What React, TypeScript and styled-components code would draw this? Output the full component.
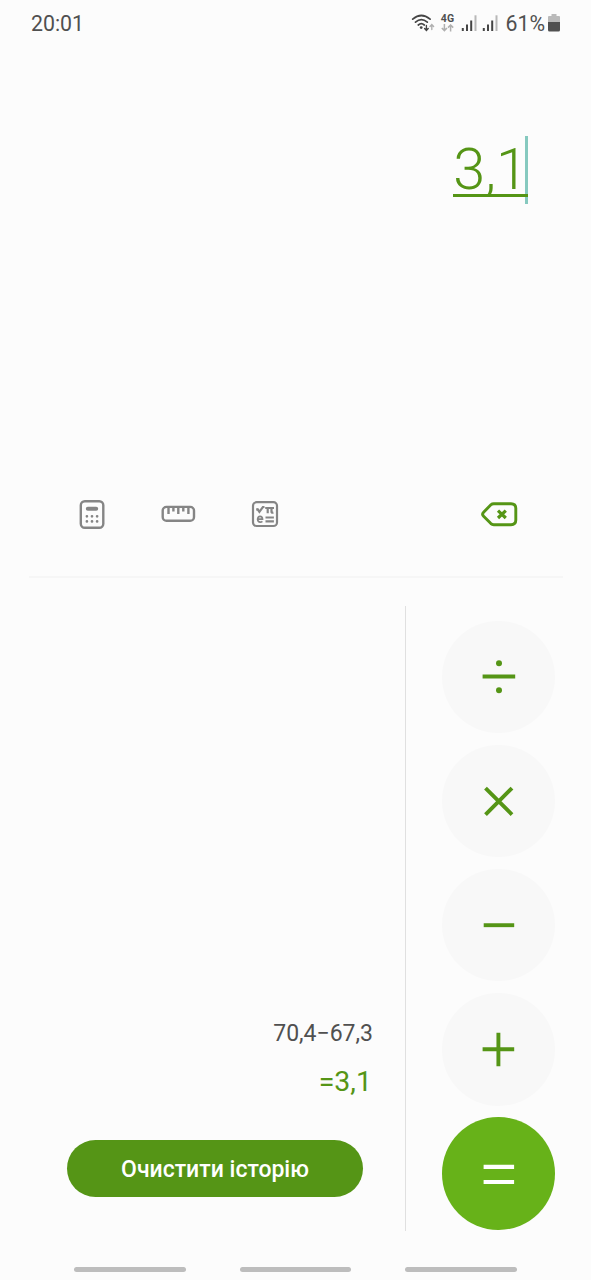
import React from "react";
import styled, { createGlobalStyle } from "styled-components";

const GREEN = "#559516";

const GlobalStyle = createGlobalStyle`
  * { box-sizing: border-box; }
  body { margin: 0; background: #fcfcfc; }
`;

const Screen = styled.main`
  width: 591px;
  height: 1280px;
  display: flex;
  flex-direction: column;
  background: #fcfcfc;
  font-family: Roboto, "Liberation Sans", sans-serif;
  overflow: hidden;
`;

const StatusBar = styled.header`
  height: 48px;
  padding: 0 31px 1px 31px;
  display: flex;
  align-items: center;
  justify-content: space-between;
  color: #505050;
  font-size: 21.3px;
  line-height: 26px;
`;

const StatusIcons = styled.div`
  display: flex;
  align-items: center;
  svg { display: block; }
`;

const StatusGlyphs = styled.div`
  display: flex;
  align-items: center;
  padding-bottom: 2px;
`;

const Network = styled.div`
  width: 14px;
  height: 20px;
  margin: 0 7px 0 5px;
  display: flex;
  flex-direction: column;
  align-items: center;
  font-size: 10.5px;
  font-weight: 700;
  line-height: 11px;
`;

const Percent = styled.span`
  margin: 0 3px 0 2px;
`;

const Display = styled.section`
  height: 427px;
  padding: 88px 63px 0 0;
  display: flex;
  justify-content: flex-end;
  align-items: flex-start;
`;

const Entry = styled.div`
  height: 68px;
  display: flex;
  border-right: 3px solid #86c9bf;
`;

const EntryText = styled.span`
  height: 61px;
  margin-right: -3px;
  border-bottom: 3px solid ${GREEN};
  color: ${GREEN};
  font-size: 57.5px;
  font-weight: 300;
  line-height: 67px;
`;

const Toolbar = styled.nav`
  height: 103px;
  margin: 0 28px 0 29px;
  padding: 22px 45px 0 49px;
  display: flex;
  align-items: flex-start;
  border-bottom: 2px solid #f6f6f6;
`;

const ToolButton = styled.button<{ $gap?: number; $end?: boolean }>`
  padding: 0;
  border: 0;
  background: none;
  height: 34px;
  display: flex;
  align-items: center;
  color: ${(p) => (p.$end ? GREEN : "#858585")};
  margin-right: ${(p) => p.$gap ?? 0}px;
  margin-left: ${(p) => (p.$end ? "auto" : "0")};
`;

const Body = styled.section`
  height: 653px;
  padding-top: 28px;
  display: flex;
`;

const History = styled.div`
  width: 406px;
  height: 625px;
  padding: 0 33px 34px 67px;
  border-right: 1px solid #e0e0e0;
  display: flex;
  flex-direction: column;
  justify-content: flex-end;
  align-items: flex-end;
`;

const Expression = styled.div`
  margin-right: -1px;
  color: #505050;
  font-size: 23px;
  line-height: 28px;
`;

const Result = styled.div`
  margin: 15px 0 39px;
  color: ${GREEN};
  font-size: 28.5px;
  line-height: 38px;
`;

const ClearButton = styled.button`
  width: 296px;
  height: 57px;
  margin-right: 9px;
  padding: 2px 0 0;
  border: 0;
  border-radius: 29px;
  background: ${GREEN};
  color: #fff;
  font: 500 23px/55px Roboto, "Liberation Sans", sans-serif;
`;

const Keys = styled.div`
  padding: 14.5px 0 0 36.4px;
  display: flex;
  flex-direction: column;
  gap: 11.7px;
`;

const Key = styled.button<{ $primary?: boolean }>`
  width: 112.5px;
  height: 112.5px;
  flex: none;
  padding: 0;
  border: 0;
  border-radius: 50%;
  display: flex;
  align-items: center;
  justify-content: center;
  background: ${(p) => (p.$primary ? "#67b219" : "#f8f8f8")};
  color: ${(p) => (p.$primary ? "#fff" : GREEN)};
`;

const NavBar = styled.footer`
  padding: 36px 0 0 74px;
  display: flex;
  gap: 54px;
`;

const NavPill = styled.div`
  width: 111.5px;
  height: 5px;
  border-radius: 3px;
  background: #bdbdbd;
`;

const Wifi = () => (
  <svg width="24" height="20" viewBox="0 0 24 20" fill="none" stroke="#454545" strokeWidth="1.7" strokeLinecap="round">
    <path d="M1.7 6.2Q10.3-1.2 19.1 6.2M4.5 9.2Q10.3 4 16.3 9.2M7.3 12Q10.3 9.4 13.3 12" />
    <circle cx="10.2" cy="14.6" r="1.4" fill="#454545" stroke="none" />
    <path d="M15.4 12.5v4.5M13.6 15.6l1.8 1.8 1.8-1.8" strokeWidth="1.4" />
    <path d="M20.8 16.5V12M19 13.4l1.8-1.8 1.8 1.8" stroke="#b0b0b0" strokeWidth="1.4" />
  </svg>
);

const DataArrows = () => (
  <svg width="13" height="8" viewBox="0 0 13 8" fill="none" stroke="#b0b0b0" strokeWidth="1.5">
    <path d="M3.4 0v6.5M.8 4l2.6 2.6L6 4M9.6 7.5V1M7 3.6L9.6 1l2.6 2.6" />
  </svg>
);

const Signal = () => (
  <svg width="21" height="18" viewBox="0 0 21 18">
    <path d="M.8 14h2v3h-2zM5 10.500h2V17H5zM9.200 6.500h2V17h-2z" fill="#454545" />
    <path d="M13.500 1.300h2V17h-2z" fill="#b8b8b8" />
  </svg>
);

const Battery = () => (
  <svg width="12" height="18" viewBox="0 0 12 18">
    <path d="M3.5 0h5v2H11q1 0 1 1v5H0V3q0-1 1-1h2.500z" fill="#bababa" />
    <path d="M0 8h12v8q0 1.500-1.500 1.500h-9Q0 17.500 0 16z" fill="#505050" />
  </svg>
);

const CalculatorIcon = () => (
  <svg width="28" height="32" viewBox="0 0 28 32" fill="none" stroke="currentColor">
    <rect x="2.800" y="3.200" width="22.500" height="26.600" rx="4" strokeWidth="2.400" />
    <path d="M9.800 10.700h8.400" strokeWidth="4" strokeLinecap="round" />
    <path d="M8.900 18.300h.01M14 18.300h.01M19.100 18.300h.01M8.900 23.400h.01M14 23.400h.01M19.100 23.400h.01" strokeWidth="2.700" strokeLinecap="round" />
  </svg>
);

const RulerIcon = () => (
  <svg width="36" height="20" viewBox="0 0 36 20" fill="none" stroke="currentColor" strokeWidth="2.400">
    <rect x="2.700" y="2.900" width="31.300" height="13.800" rx="3.800" />
    <path d="M8.500 3v7M13.400 3v4.600M18.300 3v7M23.300 3v4.600M28.400 3v7" />
  </svg>
);

const ScientificIcon = () => (
  <svg width="28" height="28" viewBox="0 0 28 28" fill="none" stroke="currentColor" strokeWidth="2">
    <rect x="2" y="2.200" width="24" height="23.800" rx="3.600" strokeWidth="2.200" />
    <path d="M5.200 9.600l1.500-.3 1.700 2.600 3.500-4.900h1.600" strokeWidth="2.200" />
    <path d="M14.200 8h8.800M16.700 8v5.300M20.500 8v4q0 1 1.900.6" strokeWidth="2.200" />
    <path d="M6.800 19.100h4.700q-.1-2.800-2.400-2.800t-2.500 3q.2 2.900 2.600 2.900 1.300 0 2.200-.8" strokeWidth="1.700" />
    <path d="M14.500 17.500h8.400M14.500 21.400h8.400" strokeWidth="2.100" />
  </svg>
);

const BackspaceIcon = () => (
  <svg width="38" height="28" viewBox="0 0 38 28" fill="none" stroke="currentColor" strokeWidth="2.900" strokeLinejoin="round">
    <path d="M13.800 3.700H31q4.800 0 4.800 4.600v11.800q0 4.600-4.800 4.600H13.800q-1.700 0-2.900-1.100L3.600 16.200q-2-2 0-4l7.300-7.400q1.200-1.100 2.900-1.100z" />
    <path d="M18 10.600l7.800 7.400M25.800 10.600L18 18" strokeWidth="3.200" />
  </svg>
);

const symbols: Record<string, React.ReactNode> = {
  divide: (
    <>
      <path d="M3.600 19.500h32.600" />
      <circle cx="20" cy="6.200" r="3" fill="currentColor" stroke="none" />
      <circle cx="20" cy="33.300" r="3" fill="currentColor" stroke="none" />
    </>
  ),
  multiply: <path d="M6.500 7.100L33 33.600M33 7.100L6.500 33.600" />,
  minus: <path d="M4.700 20.200h30.500" />,
  plus: <path d="M3.600 20.200h31.600M19.400 3.800v33.400" />,
  equals: <path d="M4.600 12.900h30.500M4.600 28h30.500" strokeWidth="4.200" />,
};

const Symbol = ({ name }: { name: string }) => (
  <svg width="40" height="40" viewBox="0 0 40 40" fill="none" stroke="currentColor" strokeWidth="3.900">
    {symbols[name]}
  </svg>
);

export default function App() {
  return (
    <Screen>
      <GlobalStyle />
      <StatusBar>
        <span>20:01</span>
        <StatusIcons>
          <StatusGlyphs>
            <Wifi />
            <Network>
              4G
              <DataArrows />
            </Network>
            <Signal />
            <Signal />
          </StatusGlyphs>
          <Percent>61%</Percent>
          <StatusGlyphs>
            <Battery />
          </StatusGlyphs>
        </StatusIcons>
      </StatusBar>
      <Display>
        <Entry>
          <EntryText>3,1</EntryText>
        </Entry>
      </Display>
      <Toolbar>
        <ToolButton $gap={54} aria-label="Calculator"><CalculatorIcon /></ToolButton>
        <ToolButton $gap={55} aria-label="Units"><RulerIcon /></ToolButton>
        <ToolButton aria-label="Scientific"><ScientificIcon /></ToolButton>
        <ToolButton $end aria-label="Backspace"><BackspaceIcon /></ToolButton>
      </Toolbar>
      <Body>
        <History>
          <Expression>70,4−67,3</Expression>
          <Result>=3,1</Result>
          <ClearButton>Очистити історію</ClearButton>
        </History>
        <Keys>
          {Object.keys(symbols).map((name) => (
            <Key key={name} $primary={name === "equals"} aria-label={name}>
              <Symbol name={name} />
            </Key>
          ))}
        </Keys>
      </Body>
      <NavBar>
        <NavPill />
        <NavPill />
        <NavPill />
      </NavBar>
    </Screen>
  );
}
